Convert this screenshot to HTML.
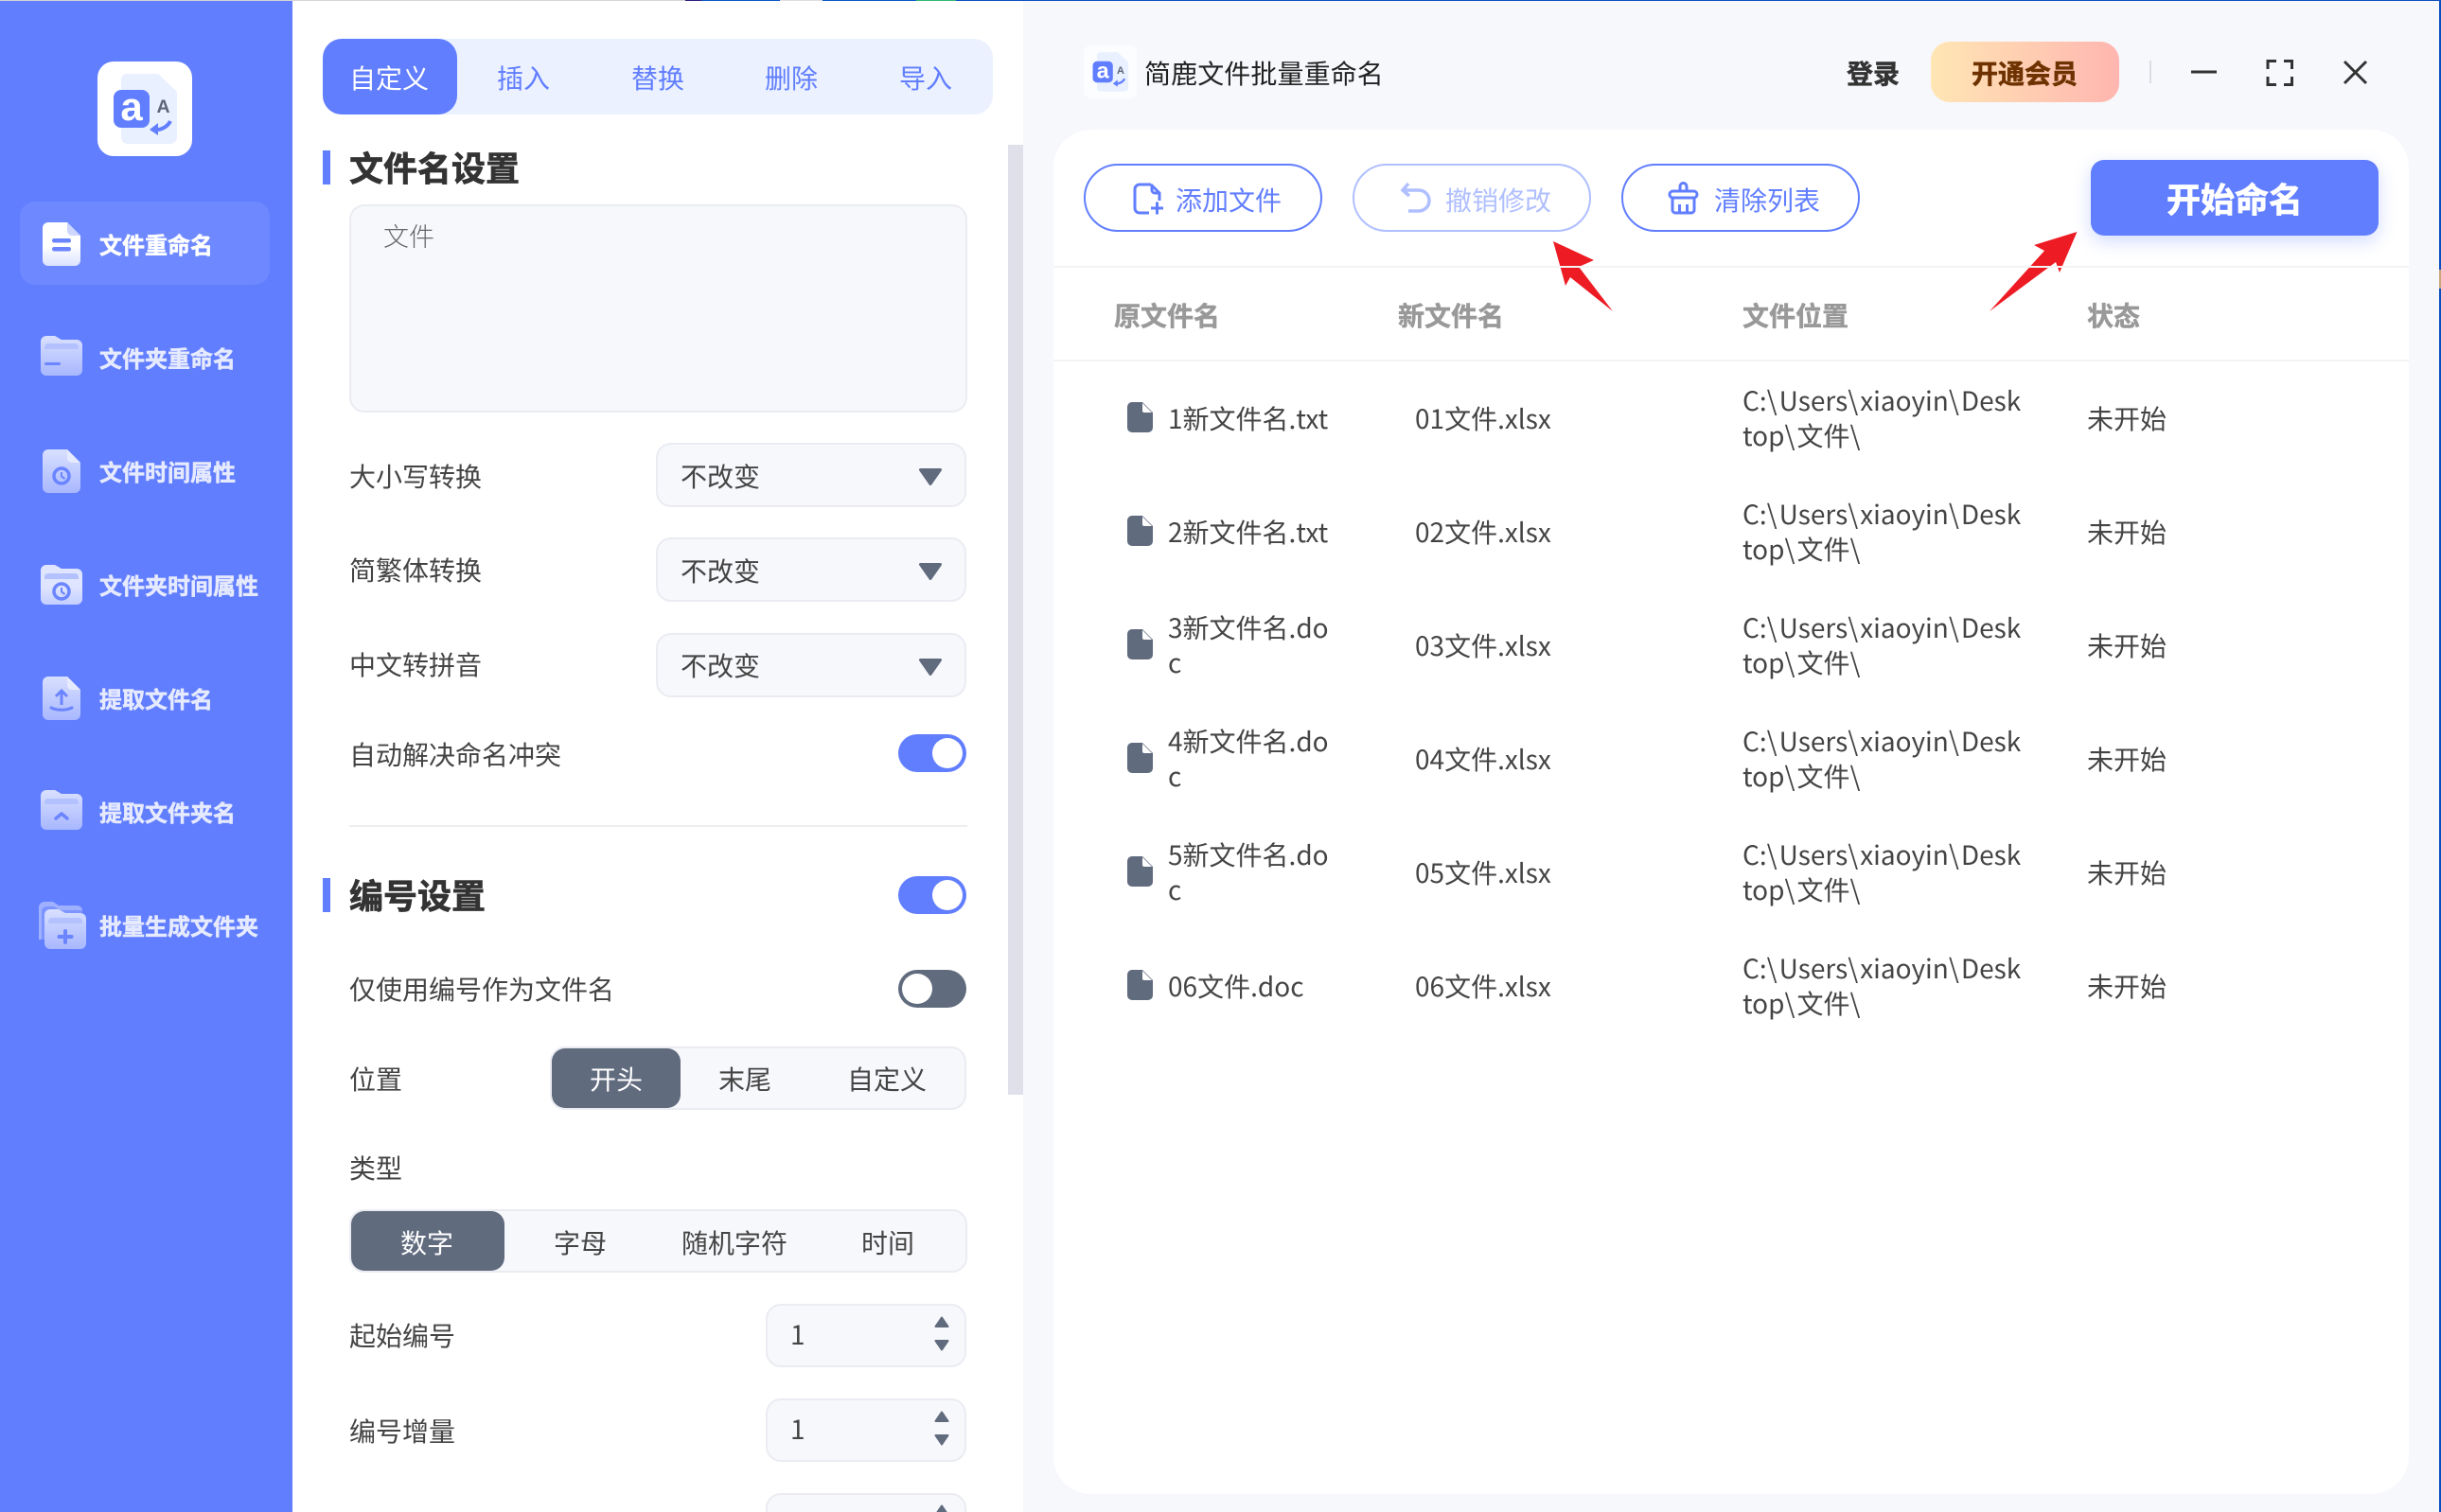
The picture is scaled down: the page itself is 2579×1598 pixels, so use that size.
<!DOCTYPE html>
<html lang="zh-CN"><head><meta charset="utf-8"><title>简鹿文件批量重命名</title>
<style>
*{box-sizing:border-box}
html,body{margin:0;padding:0;width:2579px;height:1598px;overflow:hidden}
body{font-family:"Noto Sans CJK SC","Liberation Sans",sans-serif;color:#444;font-size:28px}
#r{position:relative;width:2579px;height:1598px;overflow:hidden;background:#f7f8fc}
.a{position:absolute}
.t{position:absolute;line-height:40px;height:40px;white-space:nowrap;margin-top:-1px}
.c{transform:translateX(-50%)}
.side{font-size:24px;font-weight:700;color:#e6eaff;left:105px;margin-top:0;-webkit-text-stroke:.5px currentColor}
.h{font-size:36px;font-weight:700;color:#333;left:369px;line-height:50px;height:50px;margin-top:-2px;-webkit-text-stroke:.7px currentColor}
.box{position:absolute;background:#f7f8fc;border:2px solid #ebecf2;border-radius:16px}
.th{font-weight:700;color:#999;-webkit-text-stroke:.5px currentColor}
.bd{font-weight:700;-webkit-text-stroke:.5px currentColor}
i{font-style:normal;letter-spacing:2px}
svg{position:absolute;overflow:visible}
</style></head><body><div id="r">
<svg width="0" height="0" style="position:absolute"><defs>
<linearGradient id="g" x1="0" y1="0" x2="0" y2="1"><stop offset="0" stop-color="#d9e0ff"/><stop offset="1" stop-color="#a8b7ff"/></linearGradient>
<linearGradient id="w" x1="0" y1="0" x2="0" y2="1"><stop offset=".55" stop-color="#fff"/><stop offset="1" stop-color="#dbe2ff"/></linearGradient>
</defs></svg>

<!-- top strip -->
<div class="a" style="left:0;top:0;width:724px;height:1px;background:#d5d5d5"></div>
<div class="a" style="left:724px;top:0;width:17px;height:1px;background:#2e1a7c"></div>
<div class="a" style="left:741px;top:0;width:83px;height:1px;background:#0a55c8"></div>
<div class="a" style="left:824px;top:0;width:45px;height:1px;background:#ddd"></div>
<div class="a" style="left:869px;top:0;width:99px;height:1px;background:#0a55c8"></div>
<div class="a" style="left:968px;top:0;width:42px;height:1px;background:#2fb872"></div>
<div class="a" style="left:1010px;top:0;width:1569px;height:1px;background:#0a4fc0"></div>
<div class="a" style="left:2577px;top:1px;width:2px;height:1597px;background:#0a4fc0"></div>
<div class="a" style="left:2577px;top:285px;width:2px;height:20px;background:#c9a67a"></div>

<!-- sidebar -->
<div class="a" style="left:0;top:1px;width:309px;height:1597px;background:#617eff"></div>
<svg style="left:103px;top:65px" width="100" height="100" viewBox="0 0 100 100">
<rect width="100" height="100" rx="17" fill="#fff"/>
<path d="M31 13H64L84 32V80a7 7 0 0 1-7 7H32a7 7 0 0 1-7-7V19a6 6 0 0 1 6-6z" fill="#e9f0ff"/>
<rect x="17" y="30" width="38" height="40" rx="8" fill="#617eff"/>
<text x="36" y="62" text-anchor="middle" font-family="Liberation Sans,sans-serif" font-weight="700" font-size="42" fill="#fff">a</text>
<text x="69.500" y="54" text-anchor="middle" font-family="Liberation Sans,sans-serif" font-weight="700" font-size="19.500" fill="#5d6678">A</text>
<path d="M77 63c-3 6-10 10-18 9" stroke="#617eff" stroke-width="4" fill="none"/><path d="M55 72l9-7v13z" fill="#617eff"/>
</svg>
<div class="a" style="left:21px;top:213px;width:264px;height:88px;border-radius:16px;background:#6e89ff"></div>

<svg style="left:45px;top:235px" width="40" height="46" viewBox="0 0 40 46"><path d="M6 0H26L40 14V40a6 6 0 0 1-6 6H6a6 6 0 0 1-6-6V6a6 6 0 0 1 6-6z" fill="url(#w)"/><path d="M26 0L40 14H31a5 5 0 0 1-5-5z" fill="#cdd6ff"/><rect x="10" y="17" width="20" height="4.500" rx="2.200" fill="#6b84ff"/><rect x="10" y="26" width="20" height="4.500" rx="2.200" fill="#6b84ff"/></svg>
<div class="t side" style="top:238px;color:#fff">文件重命名</div>

<svg style="left:43px;top:355px" width="44" height="42" viewBox="0 0 44 42"><path d="M6 0H15L22 4H38a6 6 0 0 1 6 6V36a6 6 0 0 1-6 6H6a6 6 0 0 1-6-6V6a6 6 0 0 1 6-6z" fill="url(#g)"/><path d="M8 8H36a4 4 0 0 1 4 4v2H4v-2a4 4 0 0 1 4-4z" fill="#b4c1ff"/><rect x="4" y="28" width="17" height="3" rx="1.500" fill="#6b84ff"/></svg>
<div class="t side" style="top:358px">文件夹重命名</div>

<svg style="left:45px;top:475px" width="40" height="46" viewBox="0 0 40 46"><path d="M6 0H26L40 14V40a6 6 0 0 1-6 6H6a6 6 0 0 1-6-6V6a6 6 0 0 1 6-6z" fill="url(#g)"/><path d="M26 0L40 14H31a5 5 0 0 1-5-5z" fill="#e6eaff"/><circle cx="20" cy="28" r="8" fill="none" stroke="#6b84ff" stroke-width="3.500"/><path d="M20 24v4.500l3.500 2.500" fill="none" stroke="#6b84ff" stroke-width="2"/></svg>
<div class="t side" style="top:478px">文件时间属性</div>

<svg style="left:43px;top:597px" width="44" height="42" viewBox="0 0 44 42"><path d="M6 0H15L22 4H38a6 6 0 0 1 6 6V36a6 6 0 0 1-6 6H6a6 6 0 0 1-6-6V6a6 6 0 0 1 6-6z" fill="url(#w)" opacity=".8"/><path d="M8 9H36a4 4 0 0 1 4 4v2H4v-2a4 4 0 0 1 4-4z" fill="#b4c1ff"/><circle cx="22" cy="28" r="8" fill="none" stroke="#6b84ff" stroke-width="3.500"/><path d="M22 24v4.500l3.500 2.500" fill="none" stroke="#6b84ff" stroke-width="2"/></svg>
<div class="t side" style="top:598px">文件夹时间属性</div>

<svg style="left:45px;top:715px" width="40" height="46" viewBox="0 0 40 46"><path d="M6 0H26L40 14V40a6 6 0 0 1-6 6H6a6 6 0 0 1-6-6V6a6 6 0 0 1 6-6z" fill="url(#g)"/><path d="M26 0L40 14H31a5 5 0 0 1-5-5z" fill="#e6eaff"/><path d="M20 30V16M14 21l6-6 6 6" fill="none" stroke="#6b84ff" stroke-width="3"/><path d="M9 33c6 3 16 3 22 0" fill="none" stroke="#6b84ff" stroke-width="3" stroke-linecap="round"/></svg>
<div class="t side" style="top:718px">提取文件名</div>

<svg style="left:43px;top:835px" width="44" height="42" viewBox="0 0 44 42"><path d="M6 0H15L22 4H38a6 6 0 0 1 6 6V36a6 6 0 0 1-6 6H6a6 6 0 0 1-6-6V6a6 6 0 0 1 6-6z" fill="url(#g)"/><path d="M8 9H36a4 4 0 0 1 4 4v2H4v-2a4 4 0 0 1 4-4z" fill="#b4c1ff"/><path d="M16 30l6-5 6 5" fill="none" stroke="#6b84ff" stroke-width="3.500" stroke-linecap="round"/></svg>
<div class="t side" style="top:838px">提取文件夹名</div>

<svg style="left:41px;top:953px" width="50" height="50" viewBox="0 0 50 50"><path d="M0 40V6a6 6 0 0 1 6-6H15l6 4H40a6 6 0 0 1 6 4V40z" fill="#9fb0ff"/><path d="M3 44V10a5 5 0 0 1 5-5H16l6 4H46V44z" fill="#617eff" opacity=".55"/><path d="M12 8H21L28 12H44a6 6 0 0 1 6 6V44a6 6 0 0 1-6 6H12a6 6 0 0 1-6-6V14a6 6 0 0 1 6-6z" fill="#617eff"/><path d="M12 8H21L28 12H44a6 6 0 0 1 6 6V44a6 6 0 0 1-6 6H12a6 6 0 0 1-6-6V14a6 6 0 0 1 6-6z" fill="url(#g)"/><path d="M14 17H42a4 4 0 0 1 4 4v2H10v-2a4 4 0 0 1 4-4z" fill="#b4c1ff"/><path d="M28 31V43M21.500 37H34.500" stroke="#6b84ff" stroke-width="4" stroke-linecap="round"/></svg>
<div class="t side" style="top:958px">批量生成文件夹</div>

<!-- middle panel -->
<div class="a" style="left:309px;top:1px;width:772px;height:1597px;background:#fff"></div>
<div class="a" style="left:1065px;top:153px;width:16px;height:1004px;background:#dfe0ea"></div>

<div class="a" style="left:341px;top:41px;width:708px;height:80px;border-radius:20px;background:#ebf1ff"></div>
<div class="a" style="left:341px;top:41px;width:142px;height:80px;border-radius:20px;background:#617eff"></div>
<div class="t c" style="left:411px;top:63px;color:#fff">自定义</div>
<div class="t c" style="left:553px;top:63px;color:#617eff">插入</div>
<div class="t c" style="left:695px;top:63px;color:#617eff">替换</div>
<div class="t c" style="left:836px;top:63px;color:#617eff">删除</div>
<div class="t c" style="left:978px;top:63px;color:#617eff">导入</div>

<div class="a" style="left:341px;top:159px;width:8px;height:36px;background:#617eff"></div>
<div class="t h" style="top:153px">文件名设置</div>
<div class="box" style="left:369px;top:216px;width:653px;height:220px"></div>
<div class="t" style="left:405px;top:230px;font-size:27px;font-weight:300;color:#666">文件</div>

<div class="t" style="left:369px;top:484px">大小写转换</div>
<div class="box" style="left:693px;top:468px;width:328px;height:68px"></div>
<div class="t" style="left:719px;top:484px">不改变</div>
<svg style="left:970px;top:494px" width="26" height="20" viewBox="0 0 26 20"><path d="M2.500 2.500H23.500L13 17.500z" fill="#616b7e" stroke="#616b7e" stroke-width="3" stroke-linejoin="round"/></svg>

<div class="t" style="left:369px;top:583px">简繁体转换</div>
<div class="box" style="left:693px;top:568px;width:328px;height:68px"></div>
<div class="t" style="left:719px;top:584px">不改变</div>
<svg style="left:970px;top:594px" width="26" height="20" viewBox="0 0 26 20"><path d="M2.500 2.500H23.500L13 17.500z" fill="#616b7e" stroke="#616b7e" stroke-width="3" stroke-linejoin="round"/></svg>

<div class="t" style="left:369px;top:683px">中文转拼音</div>
<div class="box" style="left:693px;top:669px;width:328px;height:68px"></div>
<div class="t" style="left:719px;top:684px">不改变</div>
<svg style="left:970px;top:695px" width="26" height="20" viewBox="0 0 26 20"><path d="M2.500 2.500H23.500L13 17.500z" fill="#616b7e" stroke="#616b7e" stroke-width="3" stroke-linejoin="round"/></svg>

<div class="t" style="left:369px;top:778px">自动解决命名冲突</div>
<div class="a" style="left:949px;top:776px;width:72px;height:40px;border-radius:20px;background:#617eff"></div>
<div class="a" style="left:985px;top:780px;width:32px;height:32px;border-radius:50%;background:#fff"></div>
<div class="a" style="left:369px;top:872px;width:653px;height:2px;background:#eee"></div>

<div class="a" style="left:341px;top:928px;width:8px;height:36px;background:#617eff"></div>
<div class="t h" style="top:922px">编号设置</div>
<div class="a" style="left:949px;top:926px;width:72px;height:40px;border-radius:20px;background:#617eff"></div>
<div class="a" style="left:985px;top:930px;width:32px;height:32px;border-radius:50%;background:#fff"></div>

<div class="t" style="left:369px;top:1026px">仅使用编号作为文件名</div>
<div class="a" style="left:949px;top:1025px;width:72px;height:40px;border-radius:20px;background:#616b7e"></div>
<div class="a" style="left:953px;top:1029px;width:32px;height:32px;border-radius:50%;background:#fff"></div>

<div class="t" style="left:369px;top:1121px">位置</div>
<div class="box" style="left:581px;top:1106px;width:440px;height:67px"></div>
<div class="a" style="left:583px;top:1108px;width:136px;height:63px;border-radius:14px;background:#616b7e"></div>
<div class="t c" style="left:651px;top:1121px;color:#fff">开头</div>
<div class="t c" style="left:787px;top:1121px">末尾</div>
<div class="t c" style="left:937px;top:1121px">自定义</div>

<div class="t" style="left:369px;top:1215px">类型</div>
<div class="box" style="left:369px;top:1278px;width:653px;height:67px"></div>
<div class="a" style="left:371px;top:1280px;width:162px;height:63px;border-radius:14px;background:#616b7e"></div>
<div class="t c" style="left:451px;top:1294px;color:#fff">数字</div>
<div class="t c" style="left:613px;top:1294px">字母</div>
<div class="t c" style="left:776px;top:1294px">随机字符</div>
<div class="t c" style="left:938px;top:1294px">时间</div>

<div class="t" style="left:369px;top:1392px">起始编号</div>
<div class="box" style="left:809px;top:1378px;width:212px;height:67px"></div>
<div class="t" style="left:835px;top:1391px">1</div>
<svg style="left:987px;top:1391px" width="16" height="37" viewBox="0 0 16 37"><path d="M1.500 11L8 1.500 14.500 11z M1.500 26H14.500L8 35.500z" fill="#616b7e" stroke="#616b7e" stroke-width="2" stroke-linejoin="round"/></svg>

<div class="t" style="left:369px;top:1493px">编号增量</div>
<div class="box" style="left:809px;top:1478px;width:212px;height:67px"></div>
<div class="t" style="left:835px;top:1491px">1</div>
<svg style="left:987px;top:1491px" width="16" height="37" viewBox="0 0 16 37"><path d="M1.500 11L8 1.500 14.500 11z M1.500 26H14.500L8 35.500z" fill="#616b7e" stroke="#616b7e" stroke-width="2" stroke-linejoin="round"/></svg>

<div class="box" style="left:809px;top:1578px;width:212px;height:67px"></div>
<svg style="left:987px;top:1590px" width="16" height="12" viewBox="0 0 16 12"><path d="M1.500 11L8 1.500 14.500 11z" fill="#616b7e" stroke="#616b7e" stroke-width="2" stroke-linejoin="round"/></svg>

<!-- title bar -->
<svg style="left:1145px;top:48px" width="56" height="56" viewBox="0 0 100 100">
<rect width="100" height="100" rx="14" fill="#fcfdff"/>
<path d="M31 13H64L84 32V80a7 7 0 0 1-7 7H32a7 7 0 0 1-7-7V19a6 6 0 0 1 6-6z" fill="#e9f0ff"/>
<rect x="17" y="30" width="38" height="40" rx="8" fill="#617eff"/>
<text x="36" y="62" text-anchor="middle" font-family="Liberation Sans,sans-serif" font-weight="700" font-size="42" fill="#fff">a</text>
<text x="69.500" y="54" text-anchor="middle" font-family="Liberation Sans,sans-serif" font-weight="700" font-size="19.500" fill="#5d6678">A</text>
<path d="M77 63c-3 6-10 10-18 9" stroke="#617eff" stroke-width="4" fill="none"/><path d="M55 72l9-7v13z" fill="#617eff"/>
</svg>
<div class="t" style="left:1209px;top:57px;margin-top:0;color:#222;letter-spacing:.1px">简鹿文件批量重命名</div>
<div class="t bd" style="left:1951px;top:57px;margin-top:0;color:#333">登录</div>
<div class="a" style="left:2040px;top:44px;width:199px;height:64px;border-radius:20px;background:linear-gradient(90deg,#ffe6b4,#ffb6b0)"></div>
<div class="t c bd" style="left:2139px;top:57px;margin-top:0;color:#6e3200">开通会员</div>
<div class="a" style="left:2271px;top:64px;width:2px;height:24px;background:#dcdde3"></div>
<svg style="left:2316px;top:63px" width="190" height="28" viewBox="0 0 190 28" fill="none" stroke="#333" stroke-width="3"><path d="M-1 13H26"/><path d="M80 10V1.500H89M97 1.500H105.500V10M105.500 18V26.500H97M89 26.500H80V18"/><path d="M161 2L184 25M184 2L161 25"/></svg>

<!-- card -->
<div class="a" style="left:1113px;top:137px;width:1432px;height:1442px;border-radius:40px;background:#fff"></div>

<div class="a" style="left:1145px;top:173px;width:252px;height:72px;border-radius:36px;border:2px solid #617eff"></div>
<svg style="left:1195px;top:190px" width="40" height="40" viewBox="1195 190 40 40" fill="none" stroke="#617eff" stroke-width="3"><path d="M1216 195H1204a5 5 0 0 0-5 5V220a5 5 0 0 0 5 5H1214"/><path d="M1216 195L1225 204V212M1217 196V201a3 3 0 0 0 3 3H1225"/><path d="M1216 220H1229M1222.500 213.500V226.500"/></svg>
<div class="t" style="left:1242px;top:192px;color:#617eff">添加文件</div>

<div class="a" style="left:1429px;top:173px;width:252px;height:72px;border-radius:36px;border:2px solid #b0bfff"></div>
<svg style="left:1476px;top:190px" width="40" height="40" viewBox="1476 190 40 40" fill="none" stroke="#b0bfff" stroke-width="3.500"><path d="M1488 194L1482 201L1489 207"/><path d="M1482 201H1499a11 11 0 0 1 0 22H1488"/></svg>
<div class="t" style="left:1527px;top:192px;color:#b0bfff">撤销修改</div>

<div class="a" style="left:1713px;top:173px;width:252px;height:72px;border-radius:36px;border:2px solid #617eff"></div>
<svg style="left:1760px;top:191px" width="40" height="38" viewBox="1760 191 40 38" fill="none" stroke="#617eff" stroke-width="3"><path d="M1775 202V197a3.500 3.500 0 0 1 7 0V202"/><rect x="1764" y="202" width="29" height="7" rx="3.500"/><path d="M1767 209V222a3 3 0 0 0 3 3H1787a3 3 0 0 0 3-3V209"/><path d="M1774.500 216V225M1782.500 216V225"/></svg>
<div class="t" style="left:1811px;top:192px;color:#617eff">清除列表</div>

<div class="a" style="left:2209px;top:169px;width:304px;height:80px;border-radius:14px;background:#617eff;box-shadow:0 6px 18px rgba(97,126,255,.28)"></div>
<div class="t c bd" style="left:2361px;top:186px;font-size:36px;line-height:50px;height:50px;color:#fff;margin-top:-2px;-webkit-text-stroke:.7px #fff">开始命名</div>

<svg style="left:0;top:0" width="2579" height="1598"><path d="M1641 255L1684 275L1668 282L1704 329L1659 293L1654 302z" fill="#ed1c24"/><path d="M2194.500 245L2149 259L2160 265L2102 329L2172 277L2176 288z" fill="#ed1c24"/></svg>

<div class="a" style="left:1113px;top:281px;width:1432px;height:2px;background:#f3f3f3"></div>
<div class="t th" style="left:1177px;top:314px">原文件名</div>
<div class="t th" style="left:1477px;top:314px">新文件名</div>
<div class="t th" style="left:1841px;top:314px">文件位置</div>
<div class="t th" style="left:2205px;top:314px">状态</div>
<div class="a" style="left:1113px;top:380px;width:1432px;height:2px;background:#f3f3f3"></div>

<!-- rows -->
<svg style="left:1191px;top:425px" width="27" height="32" viewBox="0 0 27 32"><path d="M5 0H16L27 11V27a5 5 0 0 1-5 5H5a5 5 0 0 1-5-5V5a5 5 0 0 1 5-5z" fill="#616b7e"/><path d="M16 1V9a2 2 0 0 0 2 2H26z" fill="#fff"/></svg>
<div class="t" style="left:1234px;top:423px">1新文件名.txt</div>
<div class="t" style="left:1495px;top:423px">01文件.xlsx</div>
<div class="t" style="left:1841px;top:404px">C:<i>\</i>Users<i>\</i>xiaoyin<i>\</i>Desk</div>
<div class="t" style="left:1841px;top:441px">top<i>\</i>文件<i>\</i></div>
<div class="t" style="left:2205px;top:423px">未开始</div>

<svg style="left:1191px;top:545px" width="27" height="32" viewBox="0 0 27 32"><path d="M5 0H16L27 11V27a5 5 0 0 1-5 5H5a5 5 0 0 1-5-5V5a5 5 0 0 1 5-5z" fill="#616b7e"/><path d="M16 1V9a2 2 0 0 0 2 2H26z" fill="#fff"/></svg>
<div class="t" style="left:1234px;top:543px">2新文件名.txt</div>
<div class="t" style="left:1495px;top:543px">02文件.xlsx</div>
<div class="t" style="left:1841px;top:524px">C:<i>\</i>Users<i>\</i>xiaoyin<i>\</i>Desk</div>
<div class="t" style="left:1841px;top:561px">top<i>\</i>文件<i>\</i></div>
<div class="t" style="left:2205px;top:543px">未开始</div>

<svg style="left:1191px;top:665px" width="27" height="32" viewBox="0 0 27 32"><path d="M5 0H16L27 11V27a5 5 0 0 1-5 5H5a5 5 0 0 1-5-5V5a5 5 0 0 1 5-5z" fill="#616b7e"/><path d="M16 1V9a2 2 0 0 0 2 2H26z" fill="#fff"/></svg>
<div class="t" style="left:1234px;top:644px">3新文件名.do</div>
<div class="t" style="left:1234px;top:681px">c</div>
<div class="t" style="left:1495px;top:663px">03文件.xlsx</div>
<div class="t" style="left:1841px;top:644px">C:<i>\</i>Users<i>\</i>xiaoyin<i>\</i>Desk</div>
<div class="t" style="left:1841px;top:681px">top<i>\</i>文件<i>\</i></div>
<div class="t" style="left:2205px;top:663px">未开始</div>

<svg style="left:1191px;top:785px" width="27" height="32" viewBox="0 0 27 32"><path d="M5 0H16L27 11V27a5 5 0 0 1-5 5H5a5 5 0 0 1-5-5V5a5 5 0 0 1 5-5z" fill="#616b7e"/><path d="M16 1V9a2 2 0 0 0 2 2H26z" fill="#fff"/></svg>
<div class="t" style="left:1234px;top:764px">4新文件名.do</div>
<div class="t" style="left:1234px;top:801px">c</div>
<div class="t" style="left:1495px;top:783px">04文件.xlsx</div>
<div class="t" style="left:1841px;top:764px">C:<i>\</i>Users<i>\</i>xiaoyin<i>\</i>Desk</div>
<div class="t" style="left:1841px;top:801px">top<i>\</i>文件<i>\</i></div>
<div class="t" style="left:2205px;top:783px">未开始</div>

<svg style="left:1191px;top:905px" width="27" height="32" viewBox="0 0 27 32"><path d="M5 0H16L27 11V27a5 5 0 0 1-5 5H5a5 5 0 0 1-5-5V5a5 5 0 0 1 5-5z" fill="#616b7e"/><path d="M16 1V9a2 2 0 0 0 2 2H26z" fill="#fff"/></svg>
<div class="t" style="left:1234px;top:884px">5新文件名.do</div>
<div class="t" style="left:1234px;top:921px">c</div>
<div class="t" style="left:1495px;top:903px">05文件.xlsx</div>
<div class="t" style="left:1841px;top:884px">C:<i>\</i>Users<i>\</i>xiaoyin<i>\</i>Desk</div>
<div class="t" style="left:1841px;top:921px">top<i>\</i>文件<i>\</i></div>
<div class="t" style="left:2205px;top:903px">未开始</div>

<svg style="left:1191px;top:1025px" width="27" height="32" viewBox="0 0 27 32"><path d="M5 0H16L27 11V27a5 5 0 0 1-5 5H5a5 5 0 0 1-5-5V5a5 5 0 0 1 5-5z" fill="#616b7e"/><path d="M16 1V9a2 2 0 0 0 2 2H26z" fill="#fff"/></svg>
<div class="t" style="left:1234px;top:1023px">06文件.doc</div>
<div class="t" style="left:1495px;top:1023px">06文件.xlsx</div>
<div class="t" style="left:1841px;top:1004px">C:<i>\</i>Users<i>\</i>xiaoyin<i>\</i>Desk</div>
<div class="t" style="left:1841px;top:1041px">top<i>\</i>文件<i>\</i></div>
<div class="t" style="left:2205px;top:1023px">未开始</div>
</div></body></html>
